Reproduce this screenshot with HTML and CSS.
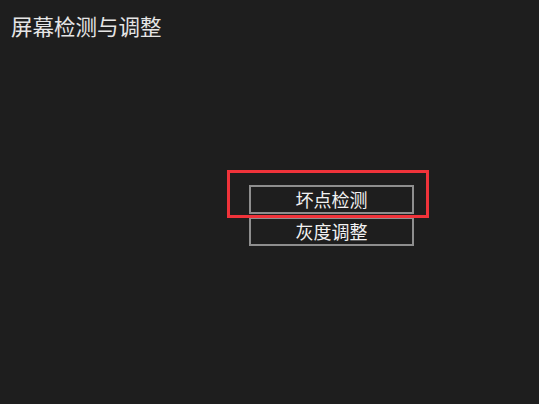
FILE: index.html
```html
<!DOCTYPE html>
<html lang="zh">
<head>
<meta charset="utf-8">
<link rel="stylesheet" href="styles.css">
</head>
<body>
<div class="screen">
  <h1 class="title">屏幕检测与调整</h1>
  <div class="menu">
    <div class="btn">坏点检测</div>
    <div class="btn">灰度调整</div>
    <div class="focus"></div>
  </div>
</div>
</body>
</html>
```

FILE: styles.css
```css
html, body {
  margin: 0;
  padding: 0;
  background: #1e1e1e;
}
.screen {
  width: 539px;
  height: 404px;
  background: #1e1e1e;
  font-family: "Noto Sans CJK SC", "Noto Sans", sans-serif;
  color: #f0f0f0;
  overflow: hidden;
}
.title {
  margin: 0;
  padding: 11px 0 0 11px;
  font-size: 21.5px;
  font-weight: normal;
  line-height: 30px;
  color: #e6e6e6;
}
.menu {
  position: relative;
  margin: 144px 0 0 249px;
  width: 165px;
  display: flex;
  flex-direction: column;
  gap: 3px;
}
.btn {
  box-sizing: border-box;
  height: 29px;
  border: 2px solid #8e8e8e;
  font-size: 18px;
  line-height: 25px;
  text-align: center;
  color: #f2f2f2;
}
.focus {
  position: absolute;
  left: -22px;
  top: -15px;
  width: 202px;
  height: 48px;
  box-sizing: border-box;
  border: 3px solid #f0333a;
}
```
